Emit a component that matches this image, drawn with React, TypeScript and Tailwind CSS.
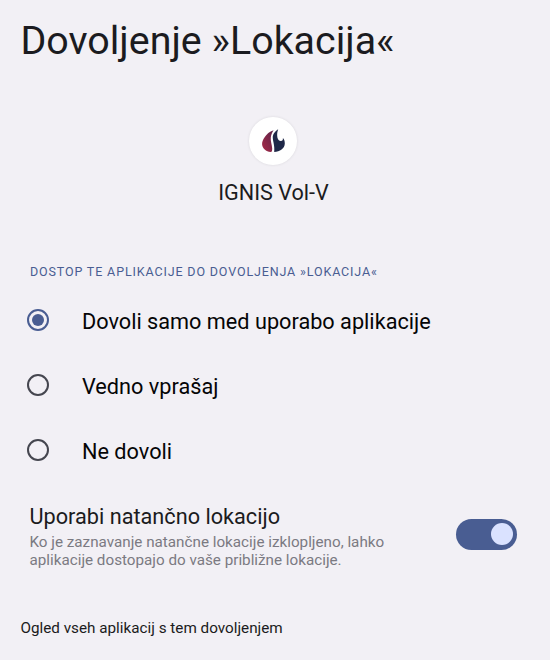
const options = [
  { label: "Dovoli samo med uporabo aplikacije", checked: true },
  { label: "Vedno vprašaj", checked: false },
  { label: "Ne dovoli", checked: false },
];

function Radio({ checked }: { checked: boolean }) {
  return (
    <span
      className={
        "flex size-[22px] shrink-0 items-center justify-center rounded-full border-2 " +
        (checked ? "border-[#495d92]" : "border-[#45464f]")
      }
    >
      {checked && <span className="size-[12px] rounded-full bg-[#495d92]" />}
    </span>
  );
}

function FlameLogo() {
  return (
    <svg width="24" height="24" viewBox="0 0 24 24">
      <defs>
        <linearGradient id="flame" x1="1" y1="0" x2="0" y2="1">
          <stop offset="0" stopColor="#5c2348" />
          <stop offset="1" stopColor="#a82a48" />
        </linearGradient>
      </defs>
      <path
        d="M12.600 1.200C8.300 2.600 5.800 5 3.800 8C1.800 11 .9 13 1.100 15.500C1.500 19.500 4.800 22.500 9.800 22.900C11 22.900 11.200 21.500 11.200 19.500C11 15.500 9.400 12.500 9.800 8.500C10.100 5.500 11.300 3 12.600 1.200Z"
        fill="url(#flame)"
      />
      <path
        d="M17.200 .3C14 2.500 11.600 5 11.800 9C12 13 13.900 17 13.200 22.900C18.800 22.900 23.800 19.500 23.800 14.500C23.800 12 23.200 10.200 21.900 9C22.200 11.200 21.200 12.200 19.600 12C17.200 11.700 16.400 9.500 16.200 7C16 4.300 16.500 2 17.200 .3Z"
        fill="#1f2848"
      />
    </svg>
  );
}

export default function App() {
  return (
    <main className="flex h-[660px] w-[550px] flex-col overflow-hidden bg-[#f2f0f5] font-['Roboto',sans-serif] text-[#1b1b20]">
      <h1 className="mt-[17px] ml-[20.5px] text-[39.4px] leading-12 whitespace-nowrap">Dovoljenje »Lokacija«</h1>

      <section className="mt-[52px] flex w-[546px] flex-col items-center">
        <div className="flex size-12 items-center justify-center rounded-full bg-white shadow-[0_0_3px_rgba(0,0,0,0.1)]">
          <FlameLogo />
        </div>
        <p className="mt-[13px] pl-px text-[21.6px] leading-[30px]">IGNIS Vol-V</p>
      </section>

      <h2 className="mt-[54px] ml-[30px] text-[12.5px] leading-5 tracking-[0.86px] whitespace-nowrap text-[#495d92]">
        DOSTOP TE APLIKACIJE DO DOVOLJENJA »LOKACIJA«
      </h2>

      <div className="mt-[5px] flex flex-col">
        {options.map((o) => (
          <label key={o.label} className="flex h-[65px] items-center pl-[27px]">
            <Radio checked={o.checked} />
            <span className="mt-[5px] ml-[33px] text-[21.7px] leading-[30px] whitespace-nowrap text-[#050506]">
              {o.label}
            </span>
          </label>
        ))}
      </div>

      <section className="mt-[20px] flex items-center justify-between pr-[33px] pl-[29.5px]">
        <div>
          <h3 className="text-[21.7px] leading-[30px] whitespace-nowrap">Uporabi natančno lokacijo</h3>
          <p className="mt-px text-[15.22px] leading-[18px] whitespace-nowrap text-[#7b7a82]">
            Ko je zaznavanje natančne lokacije izklopljeno, lahko
            <br />
            aplikacije dostopajo do vaše približne lokacije.
          </p>
        </div>
        <div className="mb-[3px] flex h-[31px] w-[61px] items-center justify-end rounded-full bg-[#495d92] pr-1">
          <span className="size-[22px] rounded-full bg-[#dae2ff]" />
        </div>
      </section>

      <p className="mt-[49px] ml-[20.5px] text-[15.25px] leading-5 whitespace-nowrap">Ogled vseh aplikacij s tem dovoljenjem</p>
    </main>
  );
}
